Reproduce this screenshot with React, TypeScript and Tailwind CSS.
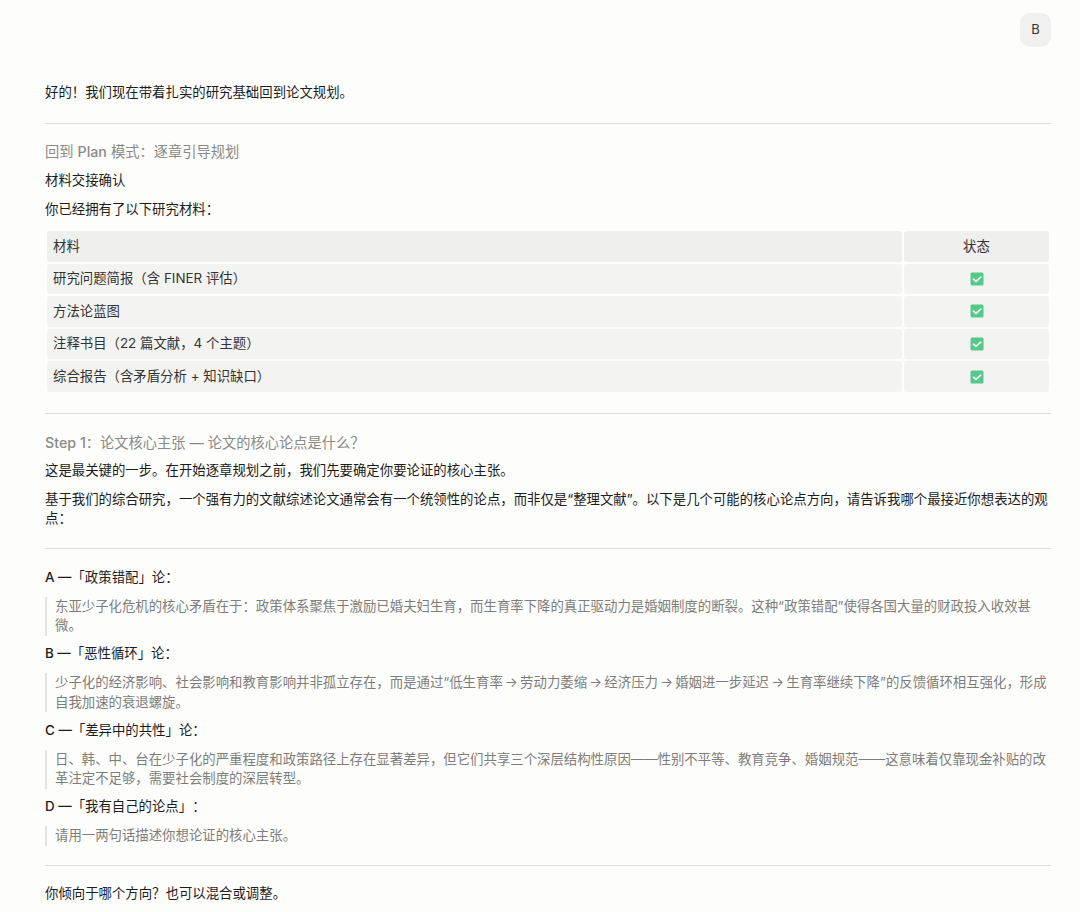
const fw = (s: string) => s.replace(/[!,:()?]/g, (c) => String.fromCharCode(c.charCodeAt(0) + 0xfee0));

const rows = ["研究问题简报(含 FINER 评估)", "方法论蓝图", "注释书目(22 篇文献,4 个主题)", "综合报告(含矛盾分析 + 知识缺口)"];

const options = [
  { mark: "A —", title: "「政策错配」论:", body: "东亚少子化危机的核心矛盾在于:政策体系聚焦于激励已婚夫妇生育,而生育率下降的真正驱动力是婚姻制度的断裂。这种“政策错配”使得各国大量的财政投入收效甚微。" },
  { mark: "B —", title: "「恶性循环」论:", body: "少子化的经济影响、社会影响和教育影响并非孤立存在,而是通过“低生育率 → 劳动力萎缩 → 经济压力 → 婚姻进一步延迟 → 生育率继续下降”的反馈循环相互强化,形成自我加速的衰退螺旋。" },
  { mark: "C —", title: "「差异中的共性」论:", body: "日、韩、中、台在少子化的严重程度和政策路径上存在显著差异,但它们共享三个深层结构性原因——性别不平等、教育竞争、婚姻规范——这意味着仅靠现金补贴的改革注定不足够,需要社会制度的深层转型。" },
  { mark: "D —", title: "「我有自己的论点」:", body: "请用一两句话描述你想论证的核心主张。" },
];

function Check() {
  return (
    <svg width="14" height="14" viewBox="0 0 14 14" aria-hidden="true">
      <rect x="0.5" y="0.5" width="13" height="13" rx="1.5" fill="#55c98a" />
      <path d="M3.4 7.2 L6 9.3 L10.8 5.2" fill="none" stroke="#f2fbf5" strokeWidth="1.7" strokeLinecap="round" strokeLinejoin="round" />
    </svg>
  );
}

export default function App() {
  return (
    <div className="h-[912px] overflow-hidden bg-[#fdfdfb] pl-[45px] pr-[29px] pt-[13px] text-[13.4px] leading-[19.5px] text-[#1c1c1c] font-['Inter','Noto_Sans_CJK_SC',sans-serif]">
      <div className="flex justify-end">
        <div className="flex h-[34px] w-[31px] items-center justify-center rounded-[10px] bg-[#f0f0ee] text-[13px] text-[#333333]">B</div>
      </div>
      <p className="mt-[36px]">{fw("好的!我们现在带着扎实的研究基础回到论文规划。")}</p>
      <hr className="mt-[20px] border-0 border-t border-[#dededc]" />
      <h2 className="mt-[17px] text-[14.25px] leading-[21px] text-[#8a8a88]">回到 <span className="font-medium">Plan</span> {fw("模式:逐章引导规划")}</h2>
      <p className="mt-[9px]">材料交接确认</p>
      <p className="mt-[9.5px]">{fw("你已经拥有了以下研究材料:")}</p>
      <table className="mt-[10px] w-full table-fixed border-separate border-spacing-x-[2px] border-spacing-y-[2px]">
        <colgroup>
          <col />
          <col className="w-[145px]" />
        </colgroup>
        <thead>
          <tr>
            <th className="h-[30.6px] rounded-[3px] bg-[#efefee] px-[6px] text-left font-normal text-[#333333]">材料</th>
            <th className="h-[30.6px] rounded-[3px] bg-[#efefee] px-[6px] text-center font-normal text-[#333333]">状态</th>
          </tr>
        </thead>
        <tbody>
          {rows.map((r) => (
            <tr key={r}>
              <td className="h-[30.6px] rounded-[3px] bg-[#f3f3f2] px-[6px] text-[#333333]">{fw(r)}</td>
              <td className="h-[30.6px] rounded-[3px] bg-[#f3f3f2] px-[6px]">
                <div className="flex justify-center"><Check /></div>
              </td>
            </tr>
          ))}
        </tbody>
      </table>
      <hr className="mt-[19px] border-0 border-t border-[#dededc]" />
      <h2 className="mt-[18px] text-[14.25px] leading-[21px] text-[#8a8a88]"><span className="font-medium">Step 1</span>{fw(":论文核心主张 — 论文的核心论点是什么?")}</h2>
      <p className="mt-[8px]">这是最关键的一步。{fw("在开始逐章规划之前,我们先要确定你要论证的核心主张。")}</p>
      <p className="mt-[9.5px]">{fw("基于我们的综合研究,一个强有力的文献综述论文通常会有一个统领性的论点,而非仅是“整理文献”。以下是几个可能的核心论点方向,请告诉我哪个最接近你想表达的观点:")}</p>
      <hr className="mt-[19px] border-0 border-t border-[#dededc]" />
      <div className="mt-[19px]">
        {options.map((o, i) => (
          <div key={o.mark} className={i ? "mt-[8.4px]" : ""}>
            <p className="[text-spacing-trim:space-all]"><span className="font-medium">{o.mark}</span>{fw(o.title)}</p>
            <blockquote className="mt-[9.5px] border-l-2 border-[#e2e2e0] pl-[8px] text-[#7d7d7b] [word-spacing:-1.5px]">{fw(o.body)}</blockquote>
          </div>
        ))}
      </div>
      <hr className="mt-[19px] border-0 border-t border-[#dededc]" />
      <p className="mt-[18px]">{fw("你倾向于哪个方向?也可以混合或调整。")}</p>
    </div>
  );
}
